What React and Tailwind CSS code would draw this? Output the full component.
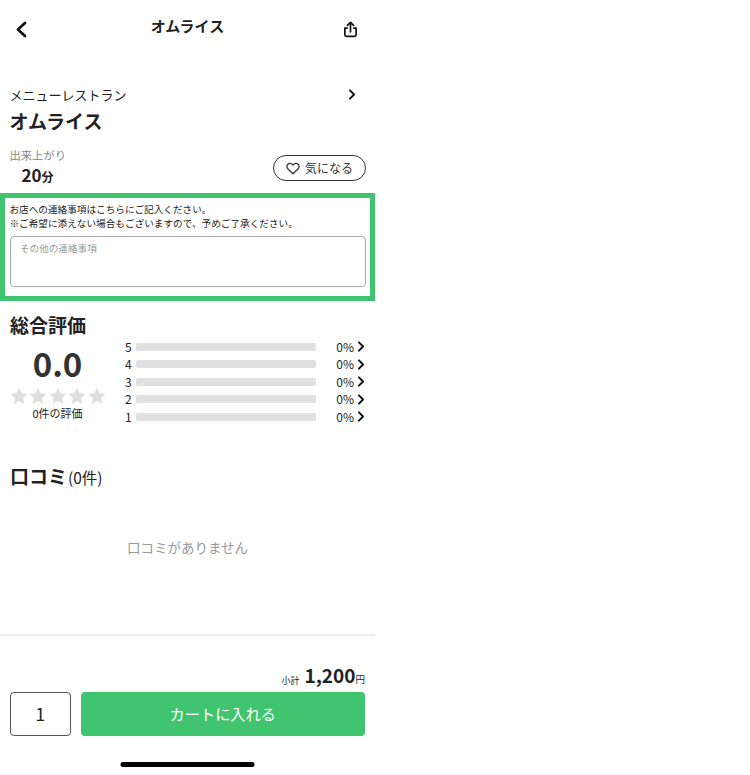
import React from "react";

const F = '[font-family:"Noto_Sans_CJK_JP","Noto_Sans",sans-serif]';

function Chevron({ className, sw = 2 }) {
  return (
    <svg viewBox="0 0 10 16" className={className} fill="none" stroke="currentColor" strokeWidth={sw} strokeLinecap="round" strokeLinejoin="round">
      <path d="M2 2l6 6-6 6" />
    </svg>
  );
}

function Star() {
  return (
    <svg viewBox="0 0 20 20" className="w-[18px] h-[18px] fill-[#dedede]">
      <path d="M10 .8l2.8 6.1 6.6.8-4.9 4.5 1.3 6.6L10 15.5l-5.8 3.3 1.3-6.6L.6 7.7l6.6-.8z" />
    </svg>
  );
}

function Row({ n }) {
  return (
    <div className="flex items-center h-[17.5px]">
      <span className="w-[6px] text-[12px] leading-none text-[#222]">{n}</span>
      <div className="ml-[5px] w-[180px] h-[8px] rounded-[2px] bg-[#e0e0e0]" />
      <span className="ml-auto text-[12px] leading-none text-[#222]">0%</span>
      <Chevron className="ml-[3px] w-[8px] h-[11px] text-[#111]" sw={2.8} />
    </div>
  );
}

export default function App() {
  return (
    <div className="w-[750px] h-[775px] bg-white">
      <div className={`w-[375px] h-[775px] flex flex-col text-[#222] ${F}`}>
        <header className="relative h-[58px] shrink-0 flex items-start justify-between pl-[15px] pr-[17px] pt-[21px]">
          <svg viewBox="0 0 12 17" className="w-[12px] h-[17px] text-[#111]" fill="none" stroke="currentColor" strokeWidth="2.8" strokeLinecap="round" strokeLinejoin="round">
            <path d="M10 2L3 8.5 10 15" />
          </svg>
          <h1 className="absolute left-0 right-0 top-[15px] text-center text-[15px] leading-[21px] font-bold text-[#222]">オムライス</h1>
          <svg viewBox="0 0 16 18" className="w-[15px] h-[17px] text-[#111]" fill="none" stroke="currentColor" strokeWidth="1.8" strokeLinecap="round" strokeLinejoin="round">
            <path d="M8 11.5V1.5M4.7 4.6L8 1.3l3.3 3.3M4.5 7.5H2v7.2c0 1 .6 1.6 1.6 1.6h8.8c1 0 1.6-.6 1.6-1.6V7.5h-2.5" />
          </svg>
        </header>

        <section className="h-[135px] shrink-0 pl-[9.5px] pr-[9px] pt-[25px]">
          <div className="flex items-center justify-between h-[22px]">
            <span className="text-[13px] leading-none">メニューレストラン</span>
            <Chevron className="w-[8px] h-[11px] mr-[10px] mt-[1px] text-[#111]" sw={2.8} />
          </div>
          <div className="mt-[3px] text-[19px] leading-[26px] font-bold">オムライス</div>
          <div className="mt-[13px] flex items-start justify-between">
            <div>
              <div className="text-[11.3px] leading-[16px] text-[#888]">出来上がり</div>
              <div className="mt-[2px] pl-[12px] leading-[20px] font-bold text-[17px]">
                20<span className="text-[12px]">分</span>
              </div>
            </div>
            <button className="mt-[8px] w-[93px] h-[26px] flex items-center justify-center gap-[5px] rounded-full border border-[#333] text-[12px] text-[#333]">
              <svg viewBox="0 0 16 15" className="w-[14px] h-[13px]" fill="none" stroke="currentColor" strokeWidth="1.5" strokeLinejoin="round">
                <path d="M8 13.6L2.2 8C.6 6.4.6 3.9 2.1 2.5c1.5-1.4 3.9-1.2 5.2.3l.7.8.7-.8c1.3-1.5 3.7-1.7 5.2-.3 1.5 1.4 1.5 3.9-.1 5.5z" />
              </svg>
              気になる
            </button>
          </div>
        </section>

        <section className="h-[108px] shrink-0 border-[5.5px] border-[#41c46f] px-[4.5px] pt-[4px]">
          <p className="text-[9.65px] leading-[14px] text-[#222] whitespace-nowrap">お店への連絡事項はこちらにご記入ください。</p>
          <p className="text-[9.65px] leading-[14px] text-[#222] whitespace-nowrap">※ご希望に添えない場合もございますので、予めご了承ください。</p>
          <textarea
            readOnly
            placeholder="その他の連絡事項"
            className="mt-[6px] block w-[356px] h-[51px] resize-none rounded-[4px] border border-[#aaa] px-[9.5px] py-[4px] text-[9.6px] leading-[14px] placeholder:text-[#999] outline-none"
          />
        </section>

        <section className="shrink-0 px-[10px] pt-[11px]">
          <h2 className="text-[19px] leading-[26px] font-bold">総合評価</h2>
          <div className="flex mt-[1px]">
            <div className="w-[95px] flex flex-col items-center">
              <div className="mt-[4px] text-[33px] leading-[40px] font-bold text-[#333]">0.0</div>
              <div className="flex gap-[1.5px] mt-[4px]">
                <Star /><Star /><Star /><Star /><Star />
              </div>
              <div className="text-[11px] leading-[16px]">0件の評価</div>
            </div>
            <div className="ml-[20px] w-[242px] -mt-[1px]">
              <Row n="5" /><Row n="4" /><Row n="3" /><Row n="2" /><Row n="1" />
            </div>
          </div>
        </section>

        <section className="shrink-0 px-[10px] mt-[37px]">
          <h2 className="text-[19px] leading-[26px] font-bold">
            口コミ<span className="ml-[1px] text-[15.5px] font-normal">(0件)</span>
          </h2>
          <p className="mt-[47px] text-center text-[13.5px] leading-[20px] text-[#999]">口コミがありません</p>
        </section>

        <div className="mt-[77px] h-[2px] shrink-0 bg-[#eeeeee]" />

        <footer className="shrink-0 px-[10px] flex flex-col">
          <div className="mt-[26px] h-[26px] flex items-end justify-end leading-none">
            <span className="text-[9px] mb-[3px] mr-[5px]">小計</span>
            <span className="text-[19px] font-bold leading-[26px]">1,200</span>
            <span className="text-[9.5px] mb-[3px]">円</span>
          </div>
          <div className="flex gap-[10px] mt-[4px] pr-[0.5px] -ml-[0.5px]">
            <div className="w-[61.5px] h-[44px] flex items-center justify-center rounded-[4px] border border-[#555] text-[18px]">1</div>
            <button className="flex-1 h-[44px] rounded-[4px] bg-[#41c46f] text-white text-[15.2px] font-normal">カートに入れる</button>
          </div>
          <div className="self-center -translate-x-[0.5px] mt-[26px] w-[134px] h-[5px] rounded-full bg-black" />
        </footer>
      </div>
    </div>
  );
}
